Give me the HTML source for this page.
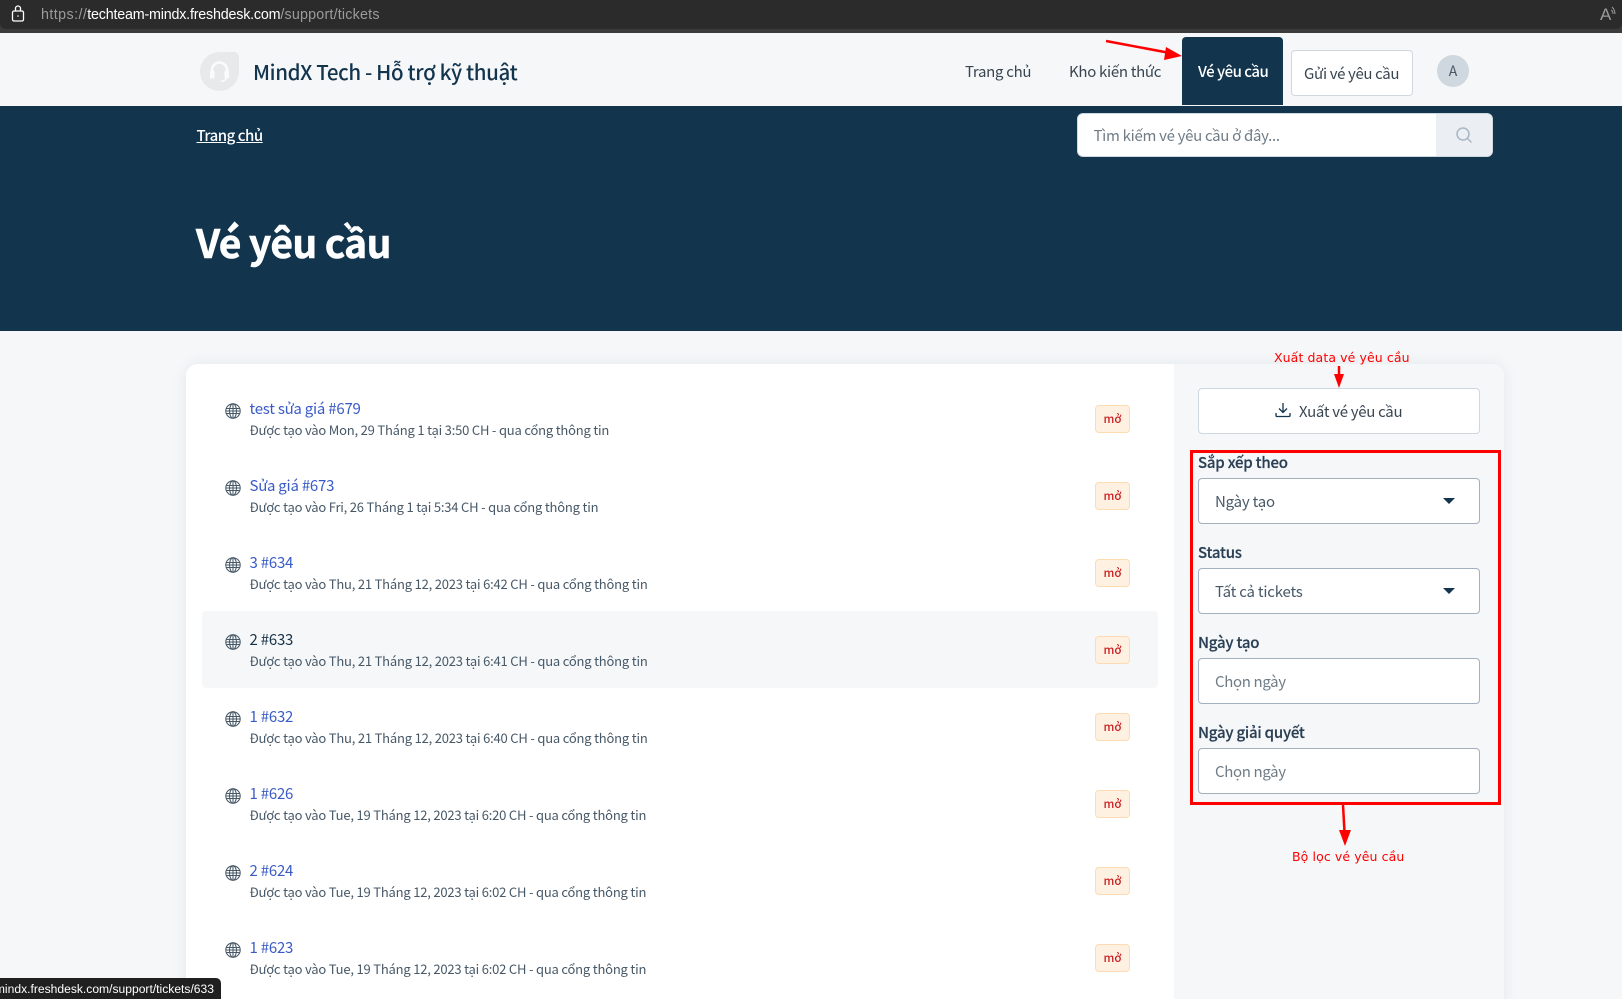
<!DOCTYPE html>
<html lang="vi"><head><meta charset="utf-8"><title>Vé yêu cầu</title>
<style>
html,body{margin:0;padding:0;width:1622px;height:999px;overflow:hidden;background:#f5f7f9}
body{position:relative;font-family:"Noto Sans CJK SC","Liberation Sans",sans-serif;color:#183247}
div,a,span.a{box-sizing:border-box}
.a{position:absolute}
.t{position:absolute;white-space:nowrap;line-height:24px;height:24px}
.tt{font-size:15px;color:#3a5bc7;letter-spacing:-.22px}
.sub{font-size:13px;color:#475867;letter-spacing:-.2px}
.bd{position:absolute;left:1095px;width:35px;height:28px;background:#fef1e1;border:1px solid #fedcb3;border-radius:4px;color:#c82124;font-size:11.5px;font-weight:500;text-align:center;line-height:27px}
.lb{font-size:15px;font-weight:500;color:#2a3f54;letter-spacing:-.22px;-webkit-text-stroke:.2px #2a3f54}
.in{position:absolute;left:1198px;width:282px;height:46px;background:#fff;border:1px solid #a3b0bd;border-radius:4px}
.arr{position:absolute;left:1443px;width:0;height:0;border-left:6.5px solid transparent;border-right:6.5px solid transparent;border-top:6.5px solid #12344d}
.v{font-size:15px;color:#475867;letter-spacing:-.2px}
.ph{font-size:15px;color:#6f7c87;letter-spacing:-.35px}
.nav{font-size:15px;color:#384551;letter-spacing:-.3px}
.red{position:absolute;color:#f00;font-family:"DejaVu Sans",sans-serif;font-size:12.5px;white-space:nowrap;line-height:16px;letter-spacing:.1px}
</style></head><body>
<div class="a" style="left:0;top:0;width:1622px;height:33px;background:#3b3b3b"></div>
<div class="a" style="left:0;top:0;width:1622px;height:29px;background:#2b2b2b;border-radius:0 0 6px 6px"></div>
<svg class="a" style="left:11px;top:5px" width="14" height="17" viewBox="0 0 14 17" fill="none" stroke="#fff" stroke-width="1.3"><rect x="1.5" y="6" width="11" height="10" rx="1.5"/><path d="M4.5 6V3.5a2.5 2.5 0 0 1 5 0V6"/><circle cx="7" cy="11" r=".8" fill="#fff" stroke="none"/></svg>
<div class="t" style="left:41px;top:3px;font:14.3px/24px 'Liberation Sans',sans-serif;color:#9b9b9b"><span style="letter-spacing:.42px">https://</span><span style="color:#fff;letter-spacing:-.2px">techteam-mindx.freshdesk.com</span><span style="letter-spacing:.2px">/support/tickets</span></div>
<div class="t" style="left:1600px;top:3px;font:17px/24px 'Liberation Sans',sans-serif;color:#9b9b9b">A</div>
<svg class="a" style="left:1611px;top:6px" width="6" height="11" viewBox="0 0 6 11" fill="none" stroke="#9b9b9b"><path d="M1 1q3 3 3 7M0 4q2 1 2 4"/></svg>

<div class="a" style="left:0;top:33px;width:1622px;height:73px;background:#f5f7f9"></div>
<div class="a" style="left:200px;top:52px;width:39px;height:39px;background:#e8e9ea;border-radius:50% 5px 50% 50%"></div>
<svg class="a" style="left:208px;top:60px" width="23" height="24" viewBox="0 0 23 24" fill="none" stroke="#fbfbfb" stroke-width="2.6"><path d="M4 13V10a7.5 7.5 0 0 1 15 0v3"/><rect x="2" y="10.5" width="4.5" height="8" rx="1.5" fill="#fbfbfb" stroke="none"/><rect x="16.5" y="10.5" width="4.5" height="8" rx="1.5" fill="#fbfbfb" stroke="none"/><path d="M18 18q0 3-5 3.5" stroke-width="1.5"/></svg>
<div class="t" style="left:253px;top:57.5px;height:26px;line-height:26px;font-size:20.5px;font-weight:500;color:#12344d;letter-spacing:-.36px">MindX Tech - Hỗ trợ kỹ thuật</div>
<div class="t nav" style="left:965px;top:60px">Trang chủ</div>
<div class="t nav" style="left:1069px;top:60px">Kho kiến thức</div>
<div class="a" style="left:1182px;top:37px;width:101px;height:68px;background:#12344d;border-radius:4px 4px 0 0"></div>
<div class="t" style="left:1198px;top:60px;font-size:15px;font-weight:500;color:#fff;letter-spacing:-.5px">Vé yêu cầu</div>
<div class="a" style="left:1291px;top:50px;width:122px;height:46px;background:#fff;border:1px solid #cfd7df;border-radius:4px"></div>
<div class="t nav" style="left:1304px;top:62px;letter-spacing:-.36px">Gửi vé yêu cầu</div>
<div class="a" style="left:1437px;top:55px;width:32px;height:32px;border-radius:50%;background:#cfd7df"></div>
<div class="t" style="left:1437px;top:59px;width:32px;text-align:center;font-size:14px;color:#475867">A</div>

<div class="a" style="left:0;top:106px;width:1622px;height:225px;background:#12344d"></div>
<div class="t" style="left:196.5px;top:124px;font-size:15px;font-weight:500;color:#fff;text-decoration:underline;letter-spacing:-.48px">Trang chủ</div>
<div class="a" style="left:1077px;top:113px;width:416px;height:44px;background:#fff;border:1px solid #cfd7df;border-radius:6px;overflow:hidden"><div class="a" style="left:358px;top:0;width:58px;height:44px;background:#ebeff3"></div></div>
<div class="t" style="left:1093.5px;top:124px;font-size:15px;color:#6f7c87;letter-spacing:-.3px">Tìm kiếm vé yêu cầu ở đây...</div>
<svg class="a" style="left:1455px;top:126px" width="18" height="18" viewBox="0 0 18 18" fill="none" stroke="#a9b6c2" stroke-width="1.5"><circle cx="8" cy="8" r="6"/><path d="M12.5 12.5L16.5 16.5"/></svg>
<div class="t" style="left:196px;top:214px;height:56px;line-height:56px;font-size:39px;font-weight:700;color:#fff;letter-spacing:-.65px;-webkit-text-stroke:.6px #fff">Vé yêu cầu</div>

<div class="a" style="left:186px;top:364px;width:1318px;height:700px;background:#fff;border-radius:12px;box-shadow:0 0 16px rgba(24,50,71,.07);overflow:hidden">
<div class="a" style="left:988px;top:0;width:330px;height:700px;background:#f5f7f9"></div>
<div class="a" style="left:16px;top:247px;width:956px;height:77px;background:#f5f7f9;border-radius:4px"></div>
</div>

<svg width="0" height="0" style="position:absolute"><defs><g id="g" fill="none" stroke="#475867" stroke-width="1.05"><circle cx="8" cy="8" r="7.2"/><ellipse cx="8" cy="8" rx="3.5" ry="7.2"/><path d="M8 1v14M1.500 5.500h13M1.500 10.500h13M1 8h14"/></g></defs></svg>

<svg class="a" style="left:225px;top:403px" width="16" height="16"><use href="#g"/></svg>
<div class="t tt" style="left:249.5px;top:397px">test sửa giá #679</div>
<div class="t sub" style="left:249.5px;top:418px">Được tạo vào Mon, 29 Tháng 1 tại 3:50 CH - qua cổng thông tin</div>
<div class="bd" style="top:405px">mở</div>

<svg class="a" style="left:225px;top:480px" width="16" height="16"><use href="#g"/></svg>
<div class="t tt" style="left:249.5px;top:474px">Sửa giá #673</div>
<div class="t sub" style="left:249.5px;top:495px">Được tạo vào Fri, 26 Tháng 1 tại 5:34 CH - qua cổng thông tin</div>
<div class="bd" style="top:482px">mở</div>

<svg class="a" style="left:225px;top:557px" width="16" height="16"><use href="#g"/></svg>
<div class="t tt" style="left:249.5px;top:551px">3 #634</div>
<div class="t sub" style="left:249.5px;top:572px">Được tạo vào Thu, 21 Tháng 12, 2023 tại 6:42 CH - qua cổng thông tin</div>
<div class="bd" style="top:559px">mở</div>

<svg class="a" style="left:225px;top:634px" width="16" height="16"><use href="#g"/></svg>
<div class="t tt" style="left:249.5px;top:628px;color:#183247">2 #633</div>
<div class="t sub" style="left:249.5px;top:649px">Được tạo vào Thu, 21 Tháng 12, 2023 tại 6:41 CH - qua cổng thông tin</div>
<div class="bd" style="top:636px">mở</div>

<svg class="a" style="left:225px;top:711px" width="16" height="16"><use href="#g"/></svg>
<div class="t tt" style="left:249.5px;top:705px">1 #632</div>
<div class="t sub" style="left:249.5px;top:726px">Được tạo vào Thu, 21 Tháng 12, 2023 tại 6:40 CH - qua cổng thông tin</div>
<div class="bd" style="top:713px">mở</div>

<svg class="a" style="left:225px;top:788px" width="16" height="16"><use href="#g"/></svg>
<div class="t tt" style="left:249.5px;top:782px">1 #626</div>
<div class="t sub" style="left:249.5px;top:803px">Được tạo vào Tue, 19 Tháng 12, 2023 tại 6:20 CH - qua cổng thông tin</div>
<div class="bd" style="top:790px">mở</div>

<svg class="a" style="left:225px;top:865px" width="16" height="16"><use href="#g"/></svg>
<div class="t tt" style="left:249.5px;top:859px">2 #624</div>
<div class="t sub" style="left:249.5px;top:880px">Được tạo vào Tue, 19 Tháng 12, 2023 tại 6:02 CH - qua cổng thông tin</div>
<div class="bd" style="top:867px">mở</div>

<svg class="a" style="left:225px;top:942px" width="16" height="16"><use href="#g"/></svg>
<div class="t tt" style="left:249.5px;top:936px">1 #623</div>
<div class="t sub" style="left:249.5px;top:957px">Được tạo vào Tue, 19 Tháng 12, 2023 tại 6:02 CH - qua cổng thông tin</div>
<div class="bd" style="top:944px">mở</div>

<div class="a" style="left:1198px;top:388px;width:282px;height:46px;background:#fff;border:1px solid #cfd7df;border-radius:4px"></div>
<svg class="a" style="left:1275px;top:402px" width="16" height="16" viewBox="0 0 16 16" fill="none" stroke="#12344d" stroke-width="1.3"><path d="M8 1v9M4 6.5L8 10.500L12 6.500M1 11v2.500q0 1 1 1h12q1 0 1-1V11"/></svg>
<div class="t nav" style="left:1299px;top:400px">Xuất vé yêu cầu</div>

<div class="t lb" style="left:1198px;top:451px">Sắp xếp theo</div>
<div class="in" style="top:478px"></div>
<div class="t v" style="left:1215px;top:490px">Ngày tạo</div>
<div class="arr" style="top:498px"></div>

<div class="t lb" style="left:1198px;top:541px">Status</div>
<div class="in" style="top:568px"></div>
<div class="t v" style="left:1215px;top:580px">Tất cả tickets</div>
<div class="arr" style="top:588px"></div>

<div class="t lb" style="left:1198px;top:631px">Ngày tạo</div>
<div class="in" style="top:658px"></div>
<div class="t ph" style="left:1215px;top:670px">Chọn ngày</div>

<div class="t lb" style="left:1198px;top:721px">Ngày giải quyết</div>
<div class="in" style="top:748px"></div>
<div class="t ph" style="left:1215px;top:760px">Chọn ngày</div>

<div class="a" style="left:1190px;top:450px;width:311px;height:355px;border:3px solid #f00"></div>
<div class="red" style="left:1274px;top:349.500px">Xuất data vé yêu cầu</div>
<div class="red" style="left:1292px;top:849px">Bộ lọc vé yêu cầu</div>
<svg class="a" style="left:0;top:0" width="1622" height="999" fill="none" stroke="#f00" stroke-width="2.5">
<path d="M1106 41L1170 53"/><path d="M1182 56L1166 47L1164 60Z" fill="#f00" stroke="none"/>
<path d="M1339 366V376"/><path d="M1339 388L1334 374H1344Z" fill="#f00" stroke="none"/>
<path d="M1343 805L1344.5 832"/><path d="M1345 846L1339 830H1351Z" fill="#f00" stroke="none"/>
</svg>

<div class="a" style="left:0;top:978px;width:221px;height:21px;background:#202020;border-radius:0 5px 0 0;overflow:hidden">
<div class="t" style="right:7px;top:-1px;font:12.1px/24px 'Liberation Sans',sans-serif;color:#fff">mindx.freshdesk.com/support/tickets/633</div></div>
</body></html>
